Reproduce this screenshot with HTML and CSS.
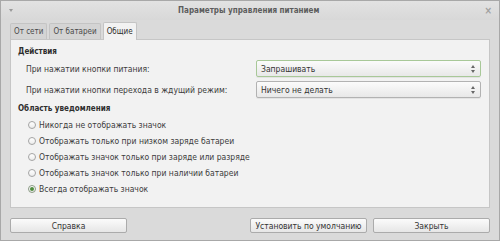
FILE: index.html
```html
<!DOCTYPE html>
<html>
<head>
	<link rel="stylesheet" href="styles.css">
</head>
<body>
	<div class="window">
		<div class="titlebar">
			<span class="menu-arrow"></span>
			<span class="title">Параметры управления питанием</span>
			<span class="close">×</span>
		</div>

		<div class="tabs">
			<span class="tab">От сети</span>
			<span class="tab">От батареи</span>
			<span class="tab active">Общие</span>
		</div>

		<div class="panel">
			<div class="section">Действия</div>
			<div class="row first">
				<span class="label">При нажатии кнопки питания:</span>
				<div class="select focused">
					<span>Запрашивать</span>
					<span class="arrows"></span>
				</div>
			</div>
			<div class="row">
				<span class="label">При нажатии кнопки перехода в ждущий режим:</span>
				<div class="select">
					<span>Ничего не делать</span>
					<span class="arrows"></span>
				</div>
			</div>

			<div class="section second">Область уведомления</div>
			<div class="radios">
				<label class="radio"><span class="dot"></span>Никогда не отображать значок</label>
				<label class="radio"><span class="dot"></span>Отображать только при низком заряде батареи</label>
				<label class="radio"><span class="dot"></span>Отображать значок только при заряде или разряде</label>
				<label class="radio"><span class="dot"></span>Отображать значок только при наличии батареи</label>
				<label class="radio"><span class="dot checked"></span>Всегда отображать значок</label>
			</div>
		</div>

		<div class="buttons">
			<button class="btn">Справка</button>
			<span class="spacer"></span>
			<button class="btn">Установить по умолчанию</button>
			<button class="btn">Закрыть</button>
		</div>
	</div>
</body>
</html>
```

FILE: styles.css
```css
* {
	box-sizing: border-box;
}

body {
	margin: 0;
	font-family: "DejaVu Sans Condensed", "DejaVu Sans", sans-serif;
	font-stretch: semi-condensed;
	font-size: 8.5px;
	color: #3c3c3c;
}

.window {
	width: 500px;
	height: 241px;
	background: #dadada;
	border: 1px solid #a8a8a8;
	display: flex;
	flex-direction: column;
}

.titlebar {
	height: 19px;
	display: flex;
	align-items: center;
	justify-content: space-between;
	padding: 0 7px 0 8px;
	background: linear-gradient(#e2e2e2, #d8d8d8);
}

.menu-arrow {
	width: 0;
	height: 0;
	border-left: 2.5px solid transparent;
	border-right: 2.5px solid transparent;
	border-top: 3px solid #9a9a9a;
}

.title {
	font-weight: bold;
	font-size: 8px;
	color: #5c5c5c;
}

.close {
	font-size: 10px;
	color: #a0a0a0;
	font-weight: bold;
}

.tabs {
	display: flex;
	align-items: flex-end;
	gap: 2px;
	padding: 2px 9px 0;
	height: 19px;
}

.tab {
	height: 16px;
	padding: 0 3px;
	display: flex;
	align-items: center;
	background: #d4d4d4;
	border: 1px solid #c4c4c4;
	border-bottom: none;
	border-radius: 2px 2px 0 0;
	font-size: 8px;
	color: #4a4a4a;
}

.tab.active {
	height: 18px;
	margin-bottom: -1px;
	background: #f2f2f2;
	color: #2e2e2e;
	position: relative;
}

.panel {
	margin: 0 9px;
	height: 169px;
	background: #f2f2f2;
	border: 1px solid #c6c6c6;
	padding: 5px 8px 0 7px;
}

.section {
	font-weight: bold;
	font-size: 8px;
	color: #2e2e2e;
	height: 14px;
	line-height: 14px;
}

.section.second {
	margin-top: 4px;
}

.row {
	display: flex;
	align-items: center;
	justify-content: space-between;
	padding-left: 8px;
	margin-top: 4px;
}

.row.first {
	margin-top: 1px;
}

.label {
	color: #3c3c3c;
	white-space: nowrap;
}

.select {
	width: 225px;
	height: 17px;
	display: flex;
	align-items: center;
	justify-content: space-between;
	padding: 0 5px 0 4px;
	border: 1px solid #b2b2b2;
	border-radius: 2px;
	background: linear-gradient(#fbfbfb, #e8e8e8);
	color: #333;
	box-shadow: 0 1px 0 rgba(0, 0, 0, 0.06);
}

.select.focused {
	border-color: #a8c898;
}

.arrows {
	width: 4px;
	height: 8px;
	position: relative;
}

.arrows::before,
.arrows::after {
	content: "";
	position: absolute;
	left: 0;
	border-left: 2px solid transparent;
	border-right: 2px solid transparent;
}

.arrows::before {
	top: 0;
	border-bottom: 3px solid #666;
}

.arrows::after {
	bottom: 0;
	border-top: 3px solid #666;
}

.radios {
	display: flex;
	flex-direction: column;
	padding-left: 10px;
	margin-top: 1px;
}

.radio {
	height: 16px;
	display: flex;
	align-items: center;
	gap: 3px;
	color: #3c3c3c;
	white-space: nowrap;
}

.dot {
	width: 8px;
	height: 8px;
	border-radius: 50%;
	border: 1px solid #a4a4a4;
	background: linear-gradient(#ffffff, #ececec);
	position: relative;
}

.dot.checked {
	border-color: #8a9a84;
}

.dot.checked::after {
	content: "";
	position: absolute;
	left: 1px;
	top: 1px;
	width: 4px;
	height: 4px;
	border-radius: 50%;
	background: #4e8c3e;
}

.buttons {
	display: flex;
	align-items: center;
	gap: 6px;
	padding: 10px 9px 0;
}

.spacer {
	flex: 1;
}

.btn {
	width: 117px;
	height: 15px;
	padding: 0;
	font-family: inherit;
	font-stretch: inherit;
	font-size: 8.5px;
	color: #333;
	white-space: nowrap;
	border: 1px solid #ababab;
	border-radius: 2px;
	background: linear-gradient(#fbfbfb, #e6e6e6);
}
```
